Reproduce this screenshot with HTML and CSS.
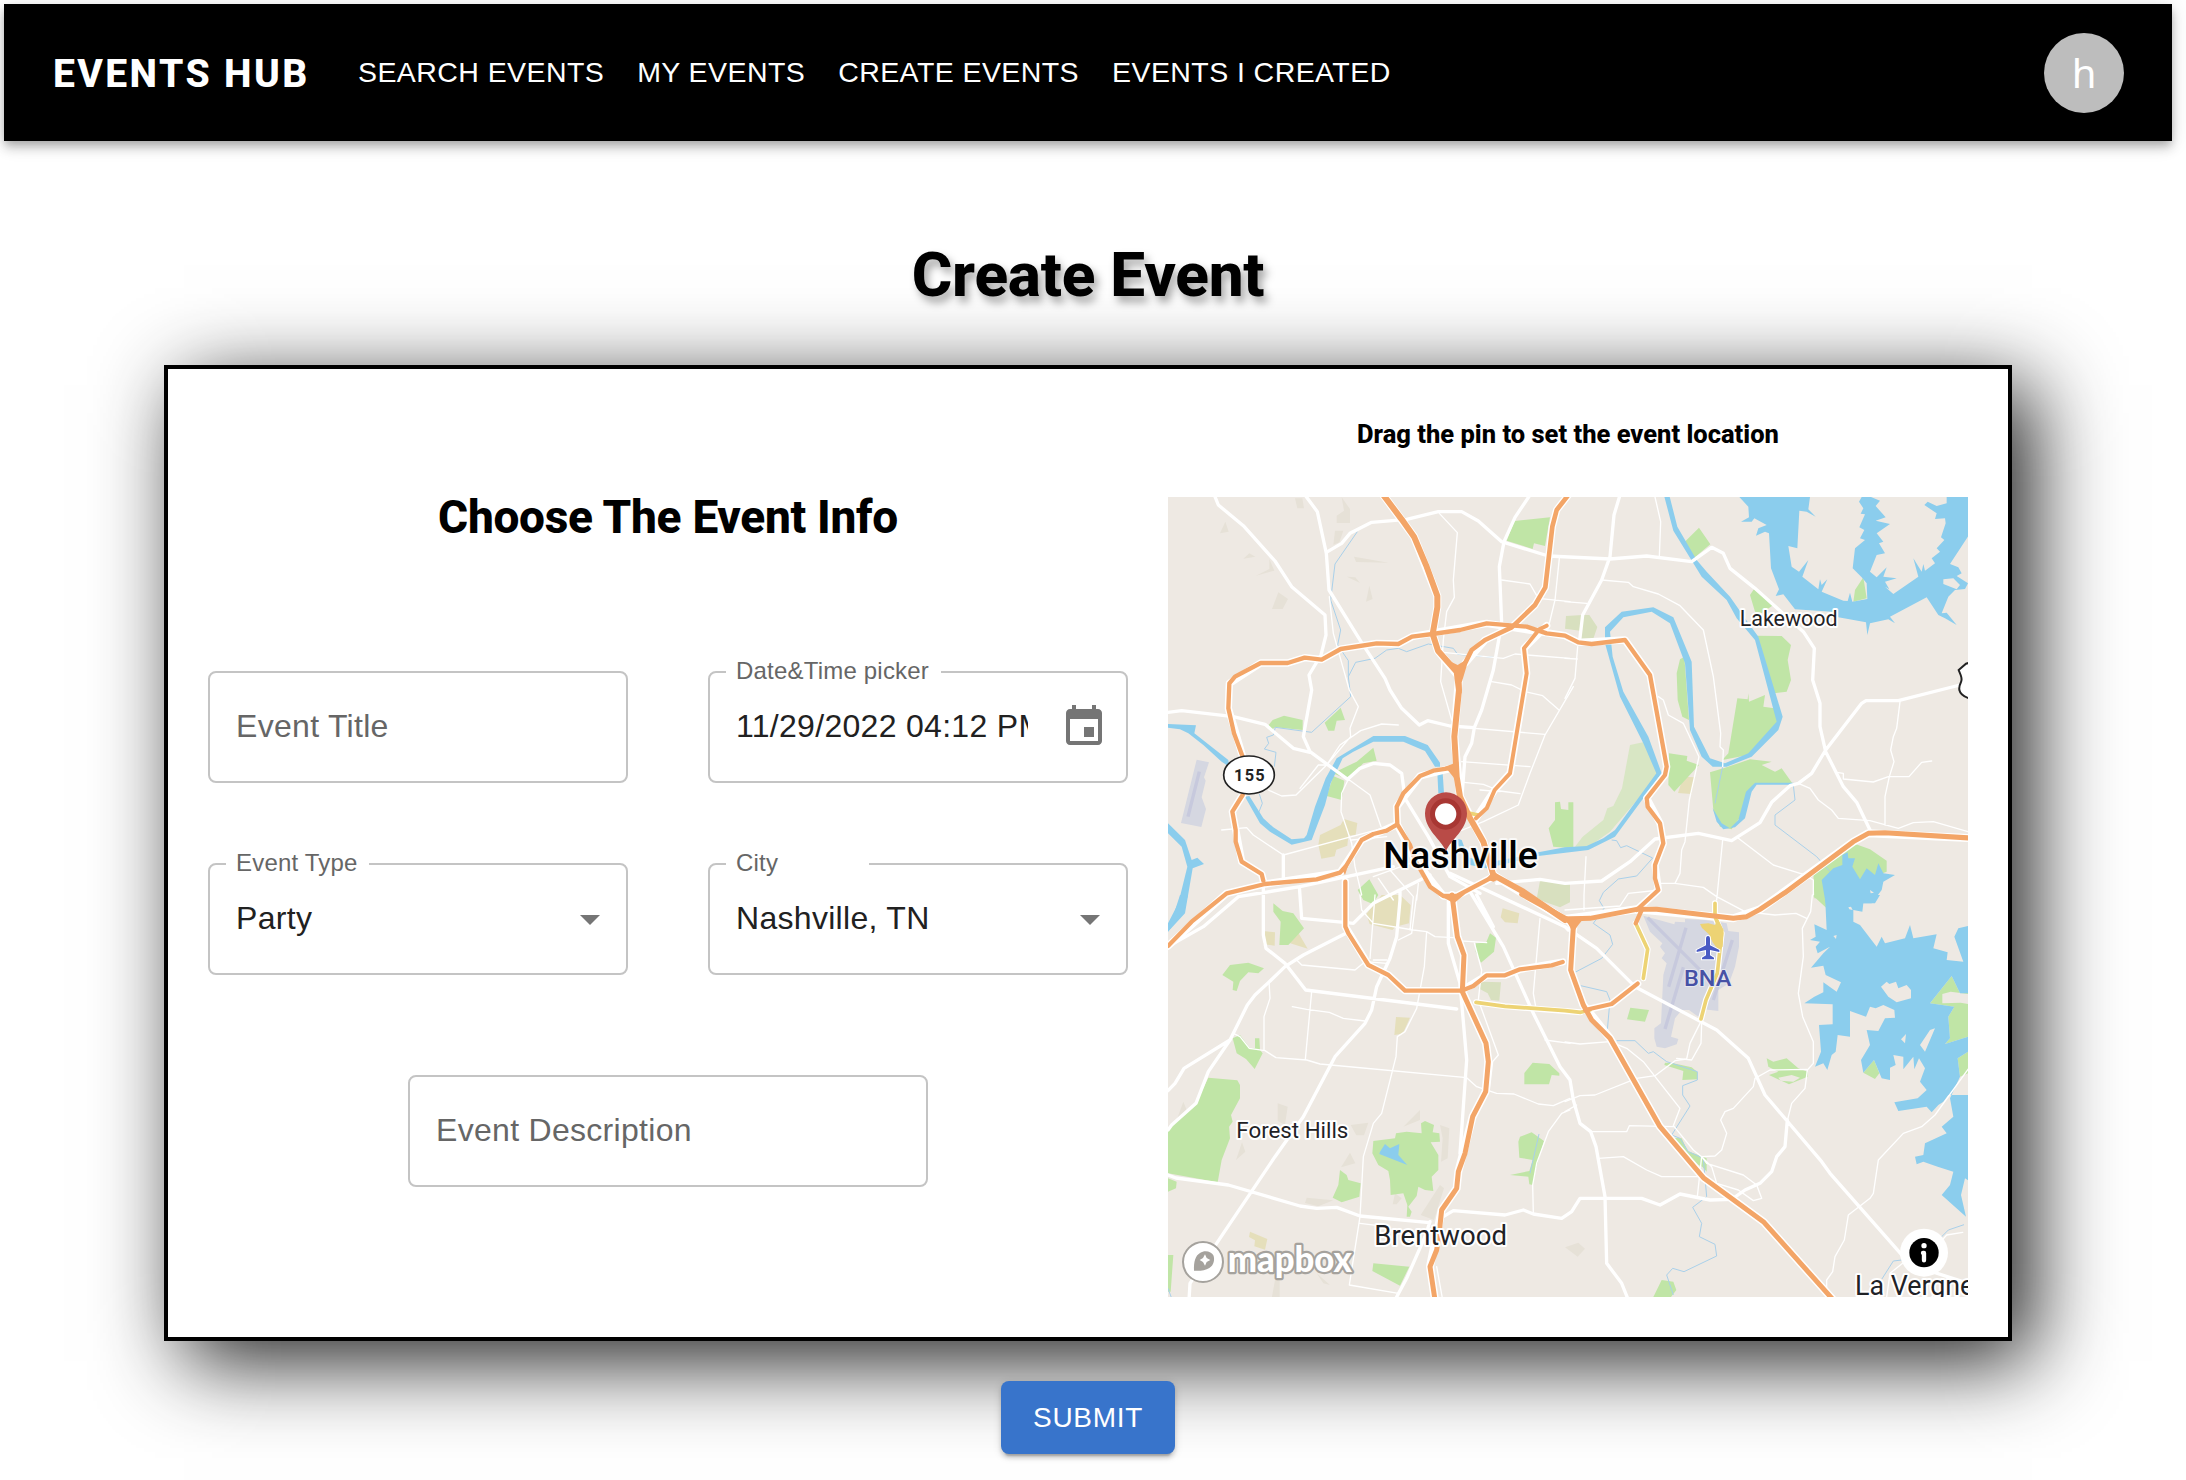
FILE: index.html
```html
<!DOCTYPE html>
<html lang="en">
<head>
<meta charset="utf-8">
<title>Events Hub</title>
<link rel="stylesheet" href="styles.css">
</head>
<body>
<header class="appbar">
  <a class="brand">EVENTS HUB</a>
  <nav class="nav">
    <a>SEARCH EVENTS</a><a>MY EVENTS</a><a>CREATE EVENTS</a><a>EVENTS I CREATED</a>
  </nav>
  <div class="avatar">h</div>
</header>
<main class="page">
  <h1 class="title">Create Event</h1>
  <section class="card">
    <form class="form">
      <h2 class="subtitle">Choose The Event Info</h2>
      <div class="fields">
        <div class="field"><span class="placeholder">Event Title</span></div>
        <div class="field"><span class="label label-date">Date&amp;Time picker</span><span class="value clipped">11/29/2022 04:12 PM</span>
          <svg class="icon-date" viewBox="0 0 24 24"><path d="M17 12h-5v5h5v-5zM16 1v2H8V1H6v2H5c-1.11 0-1.99.9-1.99 2L3 19c0 1.1.89 2 2 2h14c1.1 0 2-.9 2-2V5c0-1.1-.9-2-2-2h-1V1h-2zm3 18H5V8h14v11z"/></svg></div>
        <div class="field"><span class="label label-type">Event Type</span><span class="value">Party</span>
          <svg class="icon-drop" viewBox="0 0 24 24"><path d="M7 10l5 5 5-5z"/></svg></div>
        <div class="field"><span class="label label-city">City</span><span class="value">Nashville, TN</span>
          <svg class="icon-drop" viewBox="0 0 24 24"><path d="M7 10l5 5 5-5z"/></svg></div>
      </div>
      <div class="field field-wide"><span class="placeholder">Event Description</span></div>
    </form>
    <div class="location">
      <p class="hint">Drag the pin to set the event location</p>
      <svg class="map" viewBox="24 21 2400 2400">
        <defs>
          <g id="highways">
            <path stroke-width="18" d="M670 15L725 88L762 140L800 230L832 318V352L818 432L834 482L890 545L897 600L883 740L890 860L900 920L930 985L970 1055L1000 1155L1090 1205L1215 1290"/>
            <path stroke-width="14" d="M1225 15L1190 60L1177 110L1156 292L1125 345L1055 412L975 450L935 480L915 520L900 570"/>
            <path stroke-width="13" d="M310 1172L305 1152L245 1115L227 1055V1020L217 965L248 915M248 800L222 730L205 655L208 580L225 560L302 519H383L434 503L485 509L542 477L650 460L715 462L756 440L818 432L900 420L980 400L1100 410L1160 430L1215 437L1255 457L1295 462L1395 450L1470 555L1520 830L1515 855L1460 925L1463 950L1500 1000L1510 1060L1485 1125V1165L1495 1200L1430 1260"/>
            <path stroke-width="12" d="M1160 407L1138 418L1092 475L1100 550L1050 850L1004 900L980 955L948 985"/>
            <path stroke-width="13" d="M24 1368L95 1295L200 1210L315 1182L470 1168L540 1148L558 1128L605 1050L640 1032L680 1022L712 1003L710 950L730 910L780 858L820 842L885 832M712 1003L750 1065L765 1110L810 1190L850 1218H890L1000 1160"/>
            <path stroke-width="13" d="M556 1175V1310L565 1330L625 1425L685 1455L735 1502H905L940 1488L980 1456H1035L1080 1438L1175 1426L1208 1416"/>
            <path stroke-width="15" d="M876 1215L892 1340L912 1395L907 1505L978 1660L985 1715L977 1805L938 1880L915 1990L895 2045L890 2095L845 2160L838 2225L830 2280L810 2330L825 2430"/>
            <path stroke-width="15" d="M1215 1287L1290 1285L1430 1258L1490 1258L1720 1285L1760 1280L1800 1258L1875 1208L2080 1055L2125 1030L2175 1028L2430 1044"/>
            <path stroke-width="15" d="M1085 1213L1225 1290L1240 1310L1232 1440L1270 1545L1295 1590L1350 1645L1500 1910L1632 2065L1810 2195L2020 2430"/>
            <path stroke-width="13" d="M1275 1560L1355 1542L1433 1481M1445 1260L1427 1300"/>
          </g>
          <g id="tollways">
            <path stroke-width="11" d="M1427 1300L1463 1378L1450 1465M948 1537L1035 1549L1215 1562L1262 1567L1290 1560M1665 1240V1280L1685 1330L1672 1450L1638 1530L1623 1587M920 968L955 975"/>
          </g>
        </defs>
        <rect x="24" y="21" width="2400" height="2400" fill="#eee9e3"/>

        <g fill="#e6e1d7">
          <path d="M405 25h22l5 30h-20zM545 22l25 35v42h-40v-22l22-15zM525 122h25l-12 35-18 7zM196 95l10 30-26 5zM250 206l18-16 18 10zM288 257l40-20v-30l15 35zM355 307l29 20-16 30h-32zM582 200l104 18-98-2zM561 260l25 2 14 17zM628 287l10 40-20 8z"/>
          <g transform="translate(0 1215)"><path d="M353 625l30 10-8 55-22-12zM70 620l10 25-30 30zM208 635v80l-15 10zM246 742l10 28-28 25zM572 690l53-7-13 38h-23zM570 773l16 32-43 12zM440 908l80 8-45 18-40-10zM840 690l28 10-5 90-20 10 5-70zM840 870l12 10-30 95-40-15zM345 1155h14v55h-24zM470 1135l40 35-20-5zM780 645v30l-50 20zM705 895l20 15-15 18h-12z"/></g>
          <path d="M1215 2272l40-14 20 18-22 24z"/>
        </g>
        <g fill="#e5dfbb">
          <path d="M480 1035l62-30 10-18 40 12-5 35-22 3-3 30-33 12-5 20-40 7-9-42z"/>
          <g transform="translate(0 1215)"><path d="M310 108l35 4-1 40-34-4zM415 113l28 48-57-18zM665 0h55l32 30-5 55-40 10-10 10-68-18-10-30zM1028 40l50 15-5 30-38-3-13-15zM708 366l42 2-22 48-25 4zM270 1010l52 22-7 32-32-10 2-18-18-10z"/></g>
          <path d="M1570 860l34 2-10 50-40-3z"/>
        </g>
        <g fill="#d8e0bf">
          <path d="M1140 1172l20-2 70 12v55l-30 15-70-25zM1218 378l50-3 20 0 24 36-12 35h-42l2-24-45-6zM965 1475l58 2-5 55-25-2-10-20-28-15z"/>
        </g>
        <path fill="#d8e6c4" d="M1245 1070L1268 1040L1330 990L1342 955L1360 948L1386 895L1410 765L1456 755L1500 850L1350 1025L1280 1075Z"/>
        <g fill="#c0e5a6">
          <path d="M1063 93L1170 82L1155 168L1122 160L1118 177L1040 152ZM326 705L338 690L372 677L428 690V720L346 712L330 722ZM494 698L542 653L555 690L530 692L523 722H505ZM518 850L590 815L640 773L650 812L610 820L575 855L555 865ZM520 858L553 872L545 930L500 918ZM1185 937L1200 935L1203 957L1225 960V937H1240V1075L1180 1070L1166 1015L1185 990ZM593 1200L628 1168L655 1215L638 1242L610 1230Z"/>
          <g transform="translate(1215 0)"><path d="M358 157L402 113L436 163L388 203ZM567 297L625 345L590 370L570 365L555 315ZM575 437L650 438L678 465L668 510L678 570L665 605L628 610ZM345 508L358 500L372 690L352 680L338 630L335 550ZM517 625L548 628L550 610L552 635L600 615L595 650L628 655L640 695L550 795L472 810L490 790ZM435 847L475 835L555 808L620 815L590 825L630 845L650 835L682 880H570L548 910L540 960L500 1018L465 1010L445 960ZM312 790L367 798L365 812L402 825L328 905L310 885ZM865 335L870 300L895 262L905 325ZM745 1150L865 1060L915 1078L965 1112V1145L900 1170L780 1225H748Z"/></g>
          <g transform="translate(0 1215)"><path d="M340 25L368 48L400 55L432 100L385 150H358L362 80L340 50ZM187 240L210 210L265 203L312 220L295 235L265 232L240 258L230 288L218 285L220 260ZM218 430L240 420L270 460H285V430H298L300 465L308 475L284 522L258 492L230 475ZM145 548L232 556L240 570V610L213 660L218 680L207 695L210 730L185 795L173 862L24 835V700L108 625ZM24 850L50 860L48 880L24 890ZM24 1080H40L32 1190H24ZM947 145L978 143L990 115L1008 128L1002 170L963 203L947 170ZM1093 534L1118 503L1168 507L1198 535V542L1175 540L1167 568H1093ZM1075 740L1080 725L1115 712L1152 738L1128 820L1118 870L1108 868L1105 845L1050 840L1108 828L1118 795L1078 788ZM640 738L705 730L708 715L740 710L785 715L783 685L795 678L822 690L818 712L838 715L840 740L812 742L835 780V825L815 845L820 888L795 885L775 875L770 903L745 935L755 950L750 965H740L742 930L730 895L692 900L690 855L685 828L655 810L637 775ZM640 1105L748 1115L720 1172L637 1128ZM540 825L560 840L565 855L602 865L598 905L545 922L518 908L535 870Z"/></g>
          <g transform="translate(1215 1215)"><path d="M742 0h40l3 40zM196 338L252 345L240 380L186 373ZM300 503L325 505L380 517L398 532V553L352 555L355 528L298 510ZM605 490L625 500L665 490L700 520L728 530V545L672 568L612 540L640 530L610 515ZM895 533L927 495L943 535L930 552ZM1095 325L1160 243L1185 295L1209 280V425L1140 447L1155 430L1150 365L1168 335ZM1178 490L1209 470V535L1185 545ZM325 728L350 730L368 768L425 790V830L412 815L400 810ZM265 1206L290 1155L325 1160L334 1185L318 1206Z"/></g>
        </g>
        <path fill="#eee9e3" d="M2347 1512l25-7 60 8v30l-30-5-55 2zM1855 1763l40-8 25 8-20 12-38-3z"/>

        <g fill="#d5d7e1">
          <path d="M110 809l37 8-15 45 5 10-12 50 13 35-14 54-61-12z"/>
          <g transform="translate(1215 1215)"><path d="M235 62L328 88L330 80L360 82V72L420 75L485 85L490 108L522 112V155L510 215L492 265L460 285V348L410 342L400 365L372 345L350 345L330 370L318 425L340 432L335 448L300 460L275 455L268 430V400L288 385L295 240L305 205L290 190L300 175L285 155L292 145L255 110Z"/></g>
        </g>
        <g stroke="#c7c9dd" stroke-width="10" fill="none"><path d="M118 845L84 980M1463 1283L1640 1460M1578 1313L1526 1490M1570 1432L1515 1617M1717 1350L1660 1530"/></g>

        <g fill="none" stroke="#a9d0ea" stroke-width="3">
          <path d="M592 125L525 222L512 330L542 420L533 465L565 512L565 560L572 620L455 727L346 712L340 735L320 742L326 760L313 777L348 787L343 830M565 560L587 517L645 505L680 480L715 475L740 485L805 462L880 475L893 493L1000 502M298 912L307 940L295 970"/>
          <path d="M1628 255L1680 305M1688 830L1665 940M1900 885L1905 930L1845 975V1005L1970 1100L2010 1145M1355 1050L1370 1052L1382 1073L1400 1067L1478 1104L1430 1158L1375 1167L1330 1207L1318 1232L1332 1255L1300 1300L1350 1335L1358 1363L1325 1405L1245 1447M1262 1487L1340 1505L1350 1530L1342 1620M1370 1652H1425L1465 1690L1480 1685L1520 1715L1612 1745V1770L1568 1787V1815L1590 1848L1535 1935L1560 1945L1585 1985L1630 2005L1640 2120L1598 2152L1625 2200L1618 2240L1665 2263L1670 2298L1572 2345L1538 2335L1520 2355L1540 2415M1137 1932L1110 2050M24 2395L35 2425M2412 2204L2365 2220L2340 2245M2225 2310L2200 2313L2165 2368"/>
        </g>
        <g fill="#8bcded">
          <path d="M24 702L108 706L103 730L205 810L207 830L185 815L130 765L85 730L60 718L24 713ZM24 1000L75 1050L95 1110L112 1103L132 1122L98 1135L75 1270L24 1325V1300L55 1240L82 1130L65 1070L24 1030ZM255 920L268 918L310 985L340 1012L395 1048L432 1045L440 1035L465 950L497 865L530 805L640 738H735L803 765L840 818V830H825L795 783L730 755L640 755L580 785L548 805L512 880L495 945L470 1010L455 1050L395 1064L330 1025L300 1000ZM832 848H848L852 910H835ZM888 1045L905 1050L918 1085L900 1080ZM920 1100L980 1118L1075 1100L1135 1087L1215 1072L1280 1068L1330 1045L1365 1020L1489 850L1450 760L1380 620L1335 460L1335 412L1385 365L1480 352L1540 382L1595 515L1602 710L1650 805L1695 820L1765 790L1850 695L1785 450L1730 385L1700 330L1625 260L1540 122L1513 20H1529L1552 110L1610 210L1640 245L1710 320L1755 385L1795 440L1868 680L1855 720L1775 800L1700 830H1658L1625 800L1590 720L1575 520L1530 400L1475 365L1390 382L1350 425L1358 500L1390 605L1465 740L1505 850L1365 1040L1285 1080L1135 1098L980 1135L930 1125ZM1658 955L1685 1000L1710 1015L1735 990L1758 905L1785 878H1900V884H1790L1775 905L1755 985L1725 1012L1690 1018L1670 995Z"/>
          <g transform="translate(1215 0)"><path d="M523 21H735L730 58L752 80L725 65L703 62L697 175L670 168L680 230L702 245L730 210L712 260L760 298L765 268L770 285L787 268L770 305L835 332L848 333L855 308L862 335L907 327L905 280L890 262L863 235L870 175L900 150L885 145L898 120L883 112L900 73L887 71L895 55L882 35L890 21H918L945 32L932 48L962 82L932 92L975 102L935 130L955 155L942 160L960 190L935 195L915 245L935 262L965 232L955 260L995 265L960 275L973 298L960 290L985 312L1060 260L1045 205L1070 245L1075 222L1080 242L1110 220L1100 205L1125 185L1115 175L1138 150L1128 142L1142 100L1140 85L1110 87L1115 70L1078 45L1088 35L1115 48L1145 40V21H1215V130L1155 222L1180 232L1190 250L1175 258L1209 280L1200 297L1170 300L1150 320L1130 370L1145 368L1175 405L1140 385L1120 375L1085 322L975 380L990 400L970 388L915 400L907 435L903 397L820 382L800 365L690 358L655 313L632 318L642 298L618 235L612 130L600 125L573 137L580 115L605 105L568 85L560 95L528 95L552 82L550 50Z"/><path d="M770 1170L805 1135L832 1125V1095L848 1087L850 1105L870 1105L862 1130L885 1168L905 1135L930 1155L940 1120L955 1150L990 1155L955 1175L950 1200L920 1240H782Z"/></g>
          <path d="M60 1215H84L72 1260L24 1325M660 1985L675 1962L690 1975L718 1962L715 1995L742 2025L658 1992Z"/>
          <g transform="translate(1215 1215)"><path d="M780 0H945L930 25H895L892 50L865 45V80L885 90L935 155L950 125L960 145L1020 130L1035 90L1045 130L1115 118L1105 160L1148 172L1145 195L1195 200L1168 125L1180 100L1215 92V295L1185 295L1160 243L1095 325L1168 335L1150 365L1155 430L1140 447L1209 425V470L1178 490L1185 545L1155 610L1165 665L1130 695L1145 715L1080 745L1075 780L1050 785L1055 808L1075 800L1118 815L1165 830L1155 870L1130 900L1203 965L1188 900L1200 850L1215 860V600L1150 600L1135 620L1120 630L1100 652L1085 635L1000 648L988 622L1058 610L1085 585L1065 560L1080 520L1062 490L1048 523L1045 485L1015 523V485L985 480L992 510L975 518V555L950 550L927 495L895 533L888 495L915 450L905 405L940 408L960 370L990 368L988 345L955 330L932 340L915 335L903 365L855 348V425L818 420L812 470L800 480L787 525L775 505L750 515L768 470L762 390L803 388V328L718 325L748 305L775 292V262L815 290L828 262L782 240L775 212L738 218L775 175L795 155L758 175L752 155L765 140L735 135L752 125L748 88L785 105Z"/></g>
        </g>
        <g fill="#eee9e3"><path d="M2163 1490L2180 1475L2188 1482L2208 1475L2215 1495L2240 1485L2253 1500V1525L2210 1537L2185 1520ZM2310 1620L2325 1615L2295 1685L2280 1665ZM2223 1648L2238 1632L2235 1660ZM2350 268L2380 265L2400 285L2390 298L2350 282ZM2065 1252l8-2 5 10-10-2zM2020 1338l10-3-2 12zM2130 1200l12 8-10 2z"/></g>

        <g class="roads" fill="none" stroke="#fff">
          <g stroke-width="4">
            <path d="M838 70L892 128L880 270L883 322L860 365L850 450L842 575L875 690M1025 270L1110 282L1135 325L1230 335M1198 205L1185 330L1168 400M1230 505L1065 492L1030 505L850 487M995 575L1055 585L1095 605L1148 617L1197 660M1240 590L1155 735L1110 850L1075 945L970 995L870 1035M1155 733L883 710M1110 830L905 815M912 877L970 883L1020 903L1080 911M1020 905L960 900M508 320L520 430L568 600L595 650L570 715L572 740L500 825L408 915L365 918L325 900M500 825L475 825L420 895M565 868L630 915L663 1010M565 868L545 910L543 965L575 1060L585 1130L605 1215M715 705L665 702L602 722L540 765L500 825M185 1020L260 1013L280 1035L370 1095L555 1045L712 1003M575 1050L680 1040M640 1160L750 1120"/>
            <path d="M1485 21L1502 95L1498 200M1325 270L1405 277L1420 290L1495 312L1560 347L1630 420L1660 560L1682 730L1680 770L1690 780L1688 830M1215 335L1280 340M1253 470L1245 565L1215 625M1215 505L1252 507M1495 620L1510 630L1525 675L1570 700L1617 800L1588 930L1575 1055L1565 1080L1560 1150L1545 1180M1688 1050L1670 1230M1735 1045L1840 1125L1930 1153L1960 1170V1215M2220 635L2210 715L2200 740L2192 780L2202 815L2188 860L2175 920V1005M2315 813L2285 817L2247 860H2185L2140 876L2050 867V850L2035 848M1915 880L1950 895L1975 930L2015 960L2035 985L2130 992L2215 1015L2260 998L2320 995L2424 1025M1278 1100L1272 1215V1260M1215 1260L1380 1248L1405 1210L1500 1200M1500 1180L1545 1180L1630 1192L1670 1220L1755 1265L1845 1275L1908 1270L1940 1285"/>
            <path d="M645 1215L630 1405M600 1215L605 1260L640 1300L760 1320L800 1325L825 1340L880 1343M770 1215L755 1330L715 1350M800 1325L793 1430L770 1555L735 1625L712 1640L708 1700L665 1870L640 1900L610 2000L600 2180L568 2385L715 2410M410 1410L425 1425L585 1440L615 1415L680 1420M327 1475L330 1525L312 1580V1680M397 1550L440 1558L508 1567L550 1585L615 1593M455 1505L436 1708M220 1630L240 1640L268 1675L315 1682L348 1703L440 1710L480 1722L920 1763L950 1790L1010 1810L1062 1812L1135 1842L1180 1847L1230 1825M890 1352L980 1358M942 1355L965 1440L955 1530L1015 1695L998 1715L988 1800M1230 1860L1205 1870L1165 1925L1130 2020L1118 2085L1120 2170M1140 1285L1120 1510L1128 1555M1155 1650L1230 1660M600 2200L680 2210M830 2330L848 2430M640 1410H680M655 1165L700 1230M690 1140L760 1220L750 1320M775 1180L770 1230"/>
            <path d="M1215 1656L1260 1662L1350 1655L1400 1675L1450 1715L1560 1855L1540 1907L1600 1980L1625 2000L1640 2020L1750 2055L1790 2085L1805 2125L1780 2132L1735 2100L1670 2080L1655 2030L1625 2000M1215 1835L1260 1817L1305 1815L1430 1765L1485 1757L1545 1712L1580 1707L1590 1660L1620 1600M1625 1600L1623 1660L1595 1710L1550 1705M1290 1925H1400L1408 1907L1540 1910M1315 2005L1390 2000L1460 2040L1505 2060H1630M1625 2000L1612 2120M1785 1765L1830 1740L1940 1738M1785 1765L1780 1790L1720 1855L1695 1865L1682 1890L1700 1930L1685 1980L1665 1998L1625 2000M1957 1215L1952 1265L1927 1315L1930 1400L1915 1510L1928 1580L1960 1655V1720L1942 1740L1935 1795L1895 1840L1880 1900M2430 1730L2325 1875L2285 1910L2230 1930L2155 2010L2140 2110L2130 2125L2065 2175L2053 2250L2025 2300L2018 2345L2000 2370V2421M2408 2227L2360 2235L2320 2280M2240 2310L2190 2350L2180 2421M1215 1865L1250 1845"/>
          </g>
          <g stroke-width="10">
            <path d="M163 15L175 45L250 107L345 213L395 290L495 375L498 435L483 495L447 555L455 600L430 740L450 785L563 868L600 835L640 820L690 825L725 850L735 925L805 1040L870 1160L960 1210M435 15L472 65L499 190L507 300L603 455L675 565L690 600L725 655L778 705L803 692L870 708L943 713L965 660L1000 540L1025 400L1018 230L1032 155L1065 82L1110 15M499 187L545 160L570 130L635 97L740 88L835 65H905L955 93L1025 155L1165 198L1350 207L1460 198L1595 215L1655 172L1690 190L1710 235L1785 295L1860 362L1930 425L1963 475L1958 570L1980 640V710L1997 785L2050 890L2090 937L2130 1020M24 667L65 662L220 680L315 703L400 775L450 787M943 713L935 760L915 800L905 930M1380 15L1362 75L1350 200L1325 270L1268 375L1258 460M1997 780L2105 640L2118 632H2215L2400 585M1997 780L1955 850L1915 880L1890 887L1835 937L1800 998L1715 1052L1615 1030L1485 1047L1410 1115L1325 1173L1215 1180L1140 1168L1010 1180M370 1095V1165M310 1180V1335L318 1375L375 1420L437 1500L890 1557M418 1190L425 1285L560 1298L580 1300L640 1240L700 1210L810 1155M700 1130L420 1190L235 1220L130 1310L24 1370M870 1150L1215 1310L1225 1320M720 1200V1230L710 1340L690 1405L650 1490L635 1560L615 1600L525 1700L430 1880L345 2000L190 2230L90 2380L87 2430M558 1330L430 1395L375 1430L325 1478L285 1515L262 1545L210 1650L145 1745L108 1840L35 1905L24 1920M210 1650L72 1735L45 1780L24 1802M24 2055L48 2064L205 2085L420 2148L470 2155L530 2152L600 2178L808 2198M810 2195L795 2240L740 2365L705 2430M850 2180L880 2162L1035 2175L1090 2160L1120 2172L1205 2185L1235 2165L1260 2125H1445L1500 2145L1560 2112L1650 2130L1715 2128L1755 2100L1800 2080L1835 2045L1850 2000L1875 1970L1882 1890M930 1205L1030 1370L1120 1570L1200 1730L1230 1770L1240 1830L1260 1900L1292 1925L1308 1970L1335 2120L1340 2320L1385 2380L1405 2430M865 1230V1360L900 1480L920 1710L900 1990M1215 1310L1310 1375L1425 1490L1670 1620L1765 1705L1790 1760L1815 1815L1985 2015L2010 2050L2230 2300M950 1215L1000 1310M2300 2340L2424 2380"/>
          </g>
        </g>
        <g class="casing" fill="none">
          <path stroke-width="24" d="M670 15L762 140L832 318V352L818 432L834 482L897 560L883 740L900 920L970 1055L1000 1155L1215 1290M907 1505L978 1660L985 1715L977 1805L938 1880L895 2045L890 2095L845 2160L810 2330L825 2430M1225 1290L1240 1310L1232 1440L1270 1545L1350 1645L1500 1910L1632 2065L1810 2195L2020 2430M1215 1287L1430 1258L1720 1285L1800 1258L2080 1055L2125 1030L2430 1044M876 1215L892 1340L912 1395L907 1505"/>
          <path stroke-width="22" d="M1225 15L1190 60L1177 110L1156 292L1125 345L1055 412L975 450L915 520M248 800L205 655L208 580L302 519H383L434 503L485 509L542 477L650 460L715 462L756 440L980 400L1215 437L1255 457L1395 450L1470 555L1520 830L1515 855L1460 925L1500 1000L1510 1060L1485 1125L1495 1200L1430 1260M1160 407L1092 475L1100 550L1050 850L1004 900L948 985M24 1368L200 1210L315 1182L540 1148L605 1050L712 1003L710 950L780 858L885 832M712 1003L765 1110L850 1218H890L1000 1160M556 1175V1310L625 1425L685 1455L735 1502H905L980 1456H1035L1080 1438L1208 1416M310 1172L305 1152L245 1115L217 965L248 915M1275 1560L1355 1542L1433 1481"/>
          <path stroke-width="18" d="M1427 1300L1463 1378L1450 1465M948 1537L1035 1549L1262 1567M1665 1240V1280L1685 1330L1672 1450L1638 1530L1623 1587"/>
        </g>
        <use href="#tollways" class="toll"/>
        <use href="#highways" class="highway"/>
        <path fill="#edd374" d="M1620 1302l25-2 20 5 8-20 18 35-3 50-12 12-18-25-12-25-20-18z"/>
        <path fill="#f3a567" d="M862 510L893 525L925 505L905 560V610H890V560zM978 1168L1000 1142L1025 1165L1000 1175zM835 1215L915 1213L882 1240zM1190 1280L1275 1280L1255 1305L1238 1330L1225 1300zM855 830L895 815V880zM545 1135L565 1125L555 1155z"/>

        <g class="shield">
          <ellipse cx="267" cy="855" rx="76" ry="57" fill="#fff" stroke="#222" stroke-width="5"/>
          <text x="222" y="872" font-size="49" textLength="92">155</text>
          <path fill="#fff" stroke="#222" stroke-width="6" d="M2440 515L2418 521L2396 540L2402 555C2412 580 2395 575 2398 600C2402 618 2420 625 2445 630Z"/>
        </g>
        <g class="labels">
          <text x="1739" y="408" font-size="68" textLength="294" lengthAdjust="spacingAndGlyphs">Lakewood</text>
          <text x="229" y="1943" font-size="68" textLength="336" lengthAdjust="spacingAndGlyphs">Forest Hills</text>
          <text x="643" y="2266" font-size="82" textLength="398" lengthAdjust="spacingAndGlyphs">Brentwood</text>
          <text x="2085" y="2416" font-size="82" textLength="358" lengthAdjust="spacingAndGlyphs">La Vergne</text>
          <text class="big" x="670" y="1135" font-size="112" textLength="464" lengthAdjust="spacingAndGlyphs">Nashville</text>
          <text class="airport" x="1572" y="1489" font-size="68" textLength="142" lengthAdjust="spacingAndGlyphs">BNA</text>
        </g>
        <path fill="#4a5bc4" stroke="#fff" stroke-width="6" paint-order="stroke" d="M1644 1338c4 0 6 4 6 9v19l28 14v6l-28-6v16l12 7v5h-36v-5l12-7v-16l-28 6v-6l28-14v-19c0-5 2-9 6-9z"/>

        <path fill="#b94b47" d="M858 1084C842 1047 795 1020 795 970A63 63 0 0 1 921 970C921 1020 874 1047 858 1084Z"/>
        <circle cx="857" cy="972" r="47" fill="#a83733"/>
        <circle cx="857" cy="972" r="32" fill="#fff"/>

        <g class="logo">
          <circle cx="129" cy="2316" r="60" fill="#fff" stroke="#a5a29d" stroke-width="6"/>
          <path fill="#a5a29d" d="M102 2342C101 2315 106 2297 120 2289C137 2278 155 2287 160 2296C165 2308 162 2326 148 2334C136 2342 118 2343 102 2342Z"/>
          <path fill="#fff" d="M135 2293L140 2304L151 2310L140 2316L135 2327L129 2316L119 2310L129 2304Z"/>
          <text x="203" y="2345" font-size="106" textLength="373" lengthAdjust="spacingAndGlyphs">mapbox</text>
        </g>
        <circle cx="2292" cy="2288" r="72" fill="#fff"/>
        <circle cx="2292" cy="2288" r="44"/>
        <circle cx="2292" cy="2267" r="8" fill="#fff"/>
        <path d="M2289 2289h3v22" fill="none" stroke="#fff" stroke-width="13" stroke-linecap="round" stroke-linejoin="round"/>
      </svg>
    </div>
  </section>
  <button class="submit">SUBMIT</button>
</main>
</body>
</html>
```
FILE: styles.css
```css
* { box-sizing: border-box; }
body { margin: 0; padding: 4px 14px 0 4px; height: 1480px; overflow: hidden; background: #fff; font-family: "Liberation Sans", Arial, sans-serif; color: #212121; }
.appbar { position: relative; height: 137px; padding: 0 48px; display: flex; align-items: center; background: #000; color: #fff; box-shadow: 0 4px 8px -2px rgba(0,0,0,.2), 0 8px 10px rgba(0,0,0,.14), 0 2px 20px rgba(0,0,0,.12); }
.brand { width: 306px; padding: 4px 0 0 1px; font: 800 39px/1 Roboto, sans-serif; letter-spacing: 2.4px; white-space: nowrap; }
.nav { display: flex; gap: 33px; font-size: 28.5px; letter-spacing: .42px; white-space: nowrap; }
.avatar { margin-left: auto; width: 80px; height: 80px; border-radius: 50%; background: #bdbdbd; font: 40px/80px "Noto Sans", sans-serif; text-align: center; }
.page { width: 1848px; margin: 0 auto; display: flex; flex-direction: column; align-items: center; }
.title { margin: 88px 0 0; height: 136px; font: 800 62px/92px Roboto, sans-serif; letter-spacing: -.2px; color: #000; white-space: nowrap; text-shadow: 4px 6px 8px rgba(0,0,0,.35); }
.card { width: 1848px; height: 976px; padding: 40px; display: flex; gap: 40px; border: 4px solid #000; background: #fff; box-shadow: 20px 20px 80px rgba(0,0,0,.88); }
.form { width: 920px; display: flex; flex-direction: column; align-items: center; }
.subtitle { margin: 72px 0 0; height: 190px; font: 800 46px/72px Roboto, sans-serif; letter-spacing: -.3px; color: #000; white-space: nowrap; }
.fields { display: grid; grid-template-columns: 420px 420px; column-gap: 80px; row-gap: 80px; }
.field { position: relative; height: 112px; padding: 0 26px; display: flex; align-items: center; border: 2px solid #c4c4c4; border-radius: 8px; font-size: 32px; letter-spacing: .3px; }
.field-wide { width: 520px; margin-top: 100px; }
.placeholder { color: #666; }
.value, .placeholder { white-space: nowrap; line-height: 46px; margin-top: -2px; }
.value { color: #212121; }
.clipped { width: 292px; overflow: hidden; }
.label { position: absolute; left: 16px; top: -16px; height: 28px; padding-left: 10px; background: #fff; color: #666; font-size: 24px; line-height: 28px; letter-spacing: .2px; white-space: nowrap; }
.label-date { width: 215px; }
.label-type { width: 143px; }
.label-city { width: 143px; }
.icon-date, .icon-drop { width: 48px; height: 48px; flex: none; margin-left: auto; fill: #757575; }
.icon-date { margin-right: -8px; }
.icon-drop { margin-right: -14px; }
.location { width: 800px; display: flex; flex-direction: column; }
.hint { margin: 0; height: 88px; font: 800 25.5px/51px Roboto, sans-serif; color: #000; text-align: center; white-space: nowrap; }
.map { width: 800px; height: 800px; display: block; overflow: hidden; }
.roads, .casing, .highway, .toll { fill: none; stroke-linejoin: round; stroke-linecap: round; }
.casing { stroke: #fff; }
.highway { stroke: #f3a567; }
.toll { stroke: #edd374; }
.shield text { font-family: Roboto, sans-serif; font-weight: 700; fill: #222; }
.labels text { font-family: Roboto, sans-serif; fill: #1f2226; stroke: #fff; stroke-width: 12px; stroke-linejoin: round; paint-order: stroke; }
.labels .big { font-weight: 500; fill: #000; stroke-opacity: .75; }
.labels .airport { font-weight: 500; fill: #4651a5; stroke: #e6e7ef; stroke-width: 6px; }
.logo text { font-family: Lato, sans-serif; font-weight: 900; fill: #fff; stroke: #a5a29d; stroke-width: 13px; stroke-linejoin: round; paint-order: stroke; }
.submit { width: 174px; height: 73px; margin-top: 40px; padding: 0; border: 0; border-radius: 8px; background: #3874cb; color: #fff; font: 28px/73px "Liberation Sans", Arial, sans-serif; letter-spacing: .7px; box-shadow: 0 6px 2px -4px rgba(0,0,0,.2), 0 4px 4px rgba(0,0,0,.14), 0 2px 10px rgba(0,0,0,.12); }
```
